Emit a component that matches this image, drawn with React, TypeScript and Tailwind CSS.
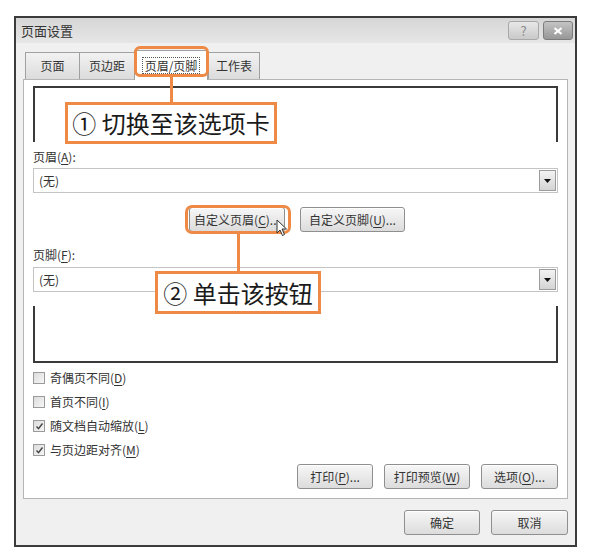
import React from "react";

const FONT = { fontFamily: '"Noto Sans CJK SC", "Noto Sans", sans-serif' };

// 带下划线的快捷键字母
const Key = ({ k }: { k: string }) => <span className="underline underline-offset-2">{k}</span>;

const Btn = ({ w, children }: { w: string; children: React.ReactNode }) => (
  <div
    className={`${w} h-[25px] flex items-center justify-center rounded-[3px] border border-[#8f8f8f] bg-gradient-to-b from-[#f7f7f7] to-[#dcdcdc] text-[12px] text-[#333] shadow-[inset_0_1px_0_#fff]`}
  >
    {children}
  </div>
);

const Select = () => (
  <div className="h-[25px] flex items-center justify-between border border-[#c4c4c4] bg-white pl-[5px] pr-px">
    <span className="text-[12px] text-[#333]">(无)</span>
    <div className="w-[17px] h-[21px] flex items-center justify-center border border-[#9c9c9c] bg-gradient-to-b from-[#f3f3f3] to-[#d4d4d4]">
      <svg width="7" height="4" viewBox="0 0 7 4">
        <path d="M0 0h7L3.5 4z" fill="#111" />
      </svg>
    </div>
  </div>
);

const Check = ({ checked, children }: { checked?: boolean; children: React.ReactNode }) => (
  <div className="h-[24px] flex items-center gap-[5px]">
    <div className="w-[12px] h-[12px] border border-[#9a9a9a] bg-gradient-to-br from-[#dcdcdc] to-[#f6f6f6] flex items-center justify-center">
      {checked && (
        <svg width="9" height="9" viewBox="0 0 9 9">
          <path d="M1.5 4.5l2 2.2L7.5 1.5" stroke="#444" strokeWidth="1.4" fill="none" />
        </svg>
      )}
    </div>
    <span className="text-[12px] text-[#333]">{children}</span>
  </div>
);

const tabs = [
  { label: "页面", w: "w-[54px]" },
  { label: "页边距", w: "w-[55px]" },
  { label: "页眉/页脚", w: "w-[74px]", active: true },
  { label: "工作表", w: "w-[52px]" },
];

export default function App() {
  return (
    <div className="relative w-[591px] h-[560px] bg-white pt-[16px] pl-[14px]" style={FONT}>
      <div className="w-[563px] h-[531px] border-2 border-[#3b3b3b] bg-[#f0f0f0] flex flex-col">
        {/* 标题栏 */}
        <div className="h-[25px] flex items-center justify-between pl-[5px] pr-[2px] bg-gradient-to-b from-[#d6d6d6] to-[#e6e6e6]">
          <span className="text-[13px] text-[#333]">页面设置</span>
          <div className="flex gap-[4px]">
            <div className="w-[31px] h-[19px] flex items-center justify-center rounded-[3px] border border-[#a8a8a8] bg-gradient-to-b from-[#e8e8e8] to-[#c9c9c9]">
              <span className="text-[13px] leading-none text-[#8a8a8a]">?</span>
            </div>
            <div className="w-[30px] h-[19px] flex items-center justify-center rounded-[3px] border border-[#7c7c7c] bg-gradient-to-b from-[#c4c4c4] to-[#979797]">
              <svg width="10" height="8" viewBox="0 0 10 8">
                <path d="M1.5 1l7 6M8.5 1l-7 6" stroke="#fff" strokeWidth="2.2" />
              </svg>
            </div>
          </div>
        </div>

        <div className="flex-1 px-[7px] pb-[10px] flex flex-col">
          {/* 选项卡 */}
          <div className="h-[36px] flex items-end pl-[2px]">
            {tabs.map((t) =>
              t.active ? (
                <div
                  key={t.label}
                  className={`${t.w} h-[30px] -mb-px relative z-10 flex items-center justify-center border border-b-0 border-[#a0a0a0] bg-white`}
                >
                  <span className="text-[12px] text-[#333] leading-[15px] px-[2px] border border-dotted border-[#555]">
                    {t.label}
                  </span>
                </div>
              ) : (
                <div
                  key={t.label}
                  className={`${t.w} h-[27px] flex items-center justify-center border border-b-0 border-r-0 last:border-r border-[#a0a0a0] bg-gradient-to-b from-[#f2f2f2] to-[#dcdcdc]`}
                >
                  <span className="text-[12px] text-[#333]">{t.label}</span>
                </div>
              )
            )}
          </div>

          {/* 选项卡内容 */}
          <div className="h-[420px] border border-[#b5b5b5] bg-white px-[9px] pt-[6px] flex flex-col">
            <div className="h-[56px] border-2 border-b-0 border-[#3a3a3a]" />
            <div className="mt-[8px] h-[14px] text-[12px] leading-[14px] text-[#333]">
              页眉(<Key k="A" />):
            </div>
            <div className="mt-[4px]">
              <Select />
            </div>
            <div className="mt-[14px] flex justify-center gap-[15px] pl-[3px]">
              <Btn w="w-[96px]">
                自定义页眉(<Key k="C" />)...
              </Btn>
              <Btn w="w-[105px]">
                自定义页脚(<Key k="U" />)...
              </Btn>
            </div>
            <div className="mt-[16px] h-[14px] text-[12px] leading-[14px] text-[#333]">
              页脚(<Key k="F" />):
            </div>
            <div className="mt-[5px]">
              <Select />
            </div>
            <div className="mt-[14px] h-[57px] border-2 border-t-0 border-[#3a3a3a]" />
            <div className="mt-[3px] flex flex-col">
              <Check>
                奇偶页不同(<Key k="D" />)
              </Check>
              <Check>
                首页不同(<Key k="I" />)
              </Check>
              <Check checked>
                随文档自动缩放(<Key k="L" />)
              </Check>
              <Check checked>
                与页边距对齐(<Key k="M" />)
              </Check>
            </div>
            <div className="mt-[2px] flex justify-end gap-[11px]">
              <Btn w="w-[76px]">
                打印(<Key k="P" />)...
              </Btn>
              <Btn w="w-[86px]">
                打印预览(<Key k="W" />)
              </Btn>
              <Btn w="w-[77px]">
                选项(<Key k="O" />)...
              </Btn>
            </div>
          </div>

          <div className="mt-[11px] flex justify-end gap-[11px]">
            <Btn w="w-[76px]">确定</Btn>
            <Btn w="w-[77px]">取消</Btn>
          </div>
        </div>
      </div>

      {/* 标注：选项卡 */}
      <div className="absolute left-[134px] top-[46px] w-[75px] h-[31px] rounded-[6px] border-[3px] border-[#ee8a45] z-20" />
      <div className="absolute left-[170px] top-[77px] w-[3px] h-[25px] bg-[#ee8a45] z-20" />
      <div className="absolute left-[65px] top-[102px] w-[212px] h-[42px] border-[3px] border-[#ee8a45] bg-white z-20 flex items-center justify-center">
        <span className="text-[24px] font-normal text-[#1a1a1a] leading-none">① 切换至该选项卡</span>
      </div>

      {/* 标注：按钮 */}
      <div className="absolute left-[185px] top-[205px] w-[106px] h-[29px] rounded-[7px] border-[3px] border-[#ee8a45] z-20" />
      <div className="absolute left-[237px] top-[234px] w-[3px] h-[37px] bg-[#ee8a45] z-20" />
      <div className="absolute left-[155px] top-[271px] w-[166px] h-[43px] border-[3px] border-[#ee8a45] bg-white z-20 flex items-center justify-center">
        <span className="text-[24px] font-normal text-[#1a1a1a] leading-none">② 单击该按钮</span>
      </div>

      {/* 鼠标指针 */}
      <svg className="absolute left-[276px] top-[219px] z-30" width="12" height="18" viewBox="0 0 12 18">
        <path d="M1 1v13l3-3 2.5 5.5 2-1L6 10h4.5z" fill="#fff" stroke="#333" strokeWidth="1" strokeLinejoin="round" />
      </svg>
    </div>
  );
}
